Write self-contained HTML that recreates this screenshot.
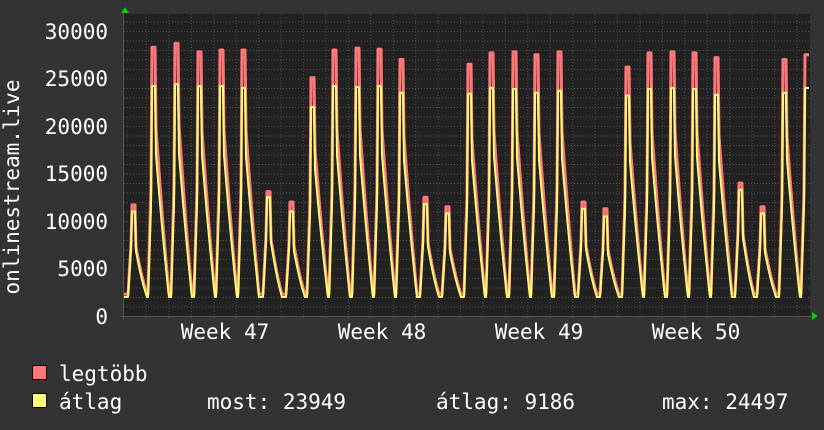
<!DOCTYPE html>
<html><head><meta charset="utf-8"><style>
body{margin:0;background:#333;width:824px;height:430px;overflow:hidden;font-family:"DejaVu Sans Mono","Liberation Mono",monospace;color:#fff}
svg{position:absolute;left:0;top:0}
</style></head><body>
<svg id="g" width="824" height="430" xmlns="http://www.w3.org/2000/svg" font-family="DejaVu Sans Mono, Liberation Mono, monospace" font-size="21" fill="#fff">
<rect x="0" y="0" width="824" height="430" fill="#333"/>
<rect x="124" y="14" width="686" height="302" fill="#222"/>
<g id="grid"></g>
<g id="data" fill="none" stroke-linejoin="round"></g>
<line x1="123.5" y1="12" x2="123.5" y2="319" stroke="#555"/>
<line x1="120" y1="316.5" x2="812" y2="316.5" stroke="#555"/>
<polygon points="121,13 125,7 129,13" fill="#0c0"/>
<polygon points="812,312 818,316 812,320" fill="#0c0"/>
<g text-anchor="end">
<text x="108" y="39">30000</text>
<text x="108" y="86">25000</text>
<text x="108" y="134">20000</text>
<text x="108" y="181">15000</text>
<text x="108" y="229">10000</text>
<text x="108" y="276">5000</text>
<text x="108" y="324">0</text>
</g>
<text transform="translate(19,187) rotate(-90)" text-anchor="middle">onlinestream.live</text>
<g text-anchor="middle">
<text x="225" y="339">Week 47</text>
<text x="382" y="339">Week 48</text>
<text x="539" y="339">Week 49</text>
<text x="696" y="339">Week 50</text>
</g>
<rect x="32.5" y="365.5" width="14" height="14" fill="#ff7777" stroke="#000"/>
<rect x="32.5" y="393.5" width="14" height="14" fill="#ffff77" stroke="#000"/>
<text x="59" y="381">legtöbb</text>
<text x="59" y="409">átlag</text>
<text x="207" y="409">most: 23949</text>
<text x="436" y="409">átlag: 9186</text>
<text x="662" y="409">max: 24497</text>
</svg>
<script>
var NS="http://www.w3.org/2000/svg";
function el(n,a,p){var e=document.createElementNS(NS,n);for(var k in a)e.setAttribute(k,a[k]);p.appendChild(e);return e;}
var grid=document.getElementById("grid");
for(var k=1;k<=31;k++){var y=316-k*9.5+0.5;if(y<14)break;
 el("line",{x1:124,x2:810,y1:y,y2:y,stroke:k%5==0?"#6e3a3a":"#505050","stroke-dasharray":"1,2"},grid);}
for(var i=-1;i<32;i++){var x=146.5+i*22.43;if(x<125||x>809)continue;var red=((i%7)+7)%7==0;
 el("line",{x1:x,x2:x,y1:14,y2:319,stroke:red?"#6e3a3a":"#505050","stroke-dasharray":"1,2"},grid);}
var P=[[133,11.7,11],[153,28.3,24.2],[176,28.7,24.4],[199,27.8,24.2],[221,28,24.2],[243,28,24],[268,13.1,12.5],[291,12,11],
[312,25.1,22],[334,28,24.2],[357,28.2,24.1],[379,28.1,24.2],[401,27,23.5],[425,12.5,11.8],[447,11.5,10.8],
[469,26.5,23.4],[491,27.7,24],[514,27.8,23.9],[536,27.5,23.5],[559,27.8,23.7],[583,12,11.3],[605,11.3,10.5],
[627,26.2,23.2],[649,27.7,23.9],[672,27.8,24],[694,27.7,23.9],[716,27.2,23.3],[740,14,13.3],[762,11.5,10.8],[784,27,23.5],[806,27.5,24]];
function val(x,idx){
 var j=0;for(var i=0;i<P.length;i++){if(x>=P[i][0]-6)j=i;}
 var p=P[j],pk=p[idx]*1000,d=x-p[0],base=idx==1?2300:2000;
 var big=p[1]>20;
 if(j==P.length-1&&d>0)return pk;
 if(d<=-5)return base;
 if(d<-1){var t=(d+5)/4;return base+(pk*(big?0.62:0.8)-base)*t;}
 if(d<=2)return pk;
 var sh=big?0.7:0.62;
 if(d<=3)return pk*sh;
 var t=(d-3)/(big?13:11);if(t>1)return base;
 return base+(sh*pk-base)*(1-t)*(big?(1-0.15*t):(1-0.3*t));
}
var data=document.getElementById("data");
[[1,"#ff7777",3],[2,"#ffff77",2]].forEach(function(s){
 var pts=[];for(var x=124;x<=809;x++){var v=val(x,s[0]);pts.push(x+","+(316-v*0.0095).toFixed(1));}
 el("polyline",{points:pts.join(" "),stroke:s[1],"stroke-width":s[2]},data);
});
</script>
</body></html>
